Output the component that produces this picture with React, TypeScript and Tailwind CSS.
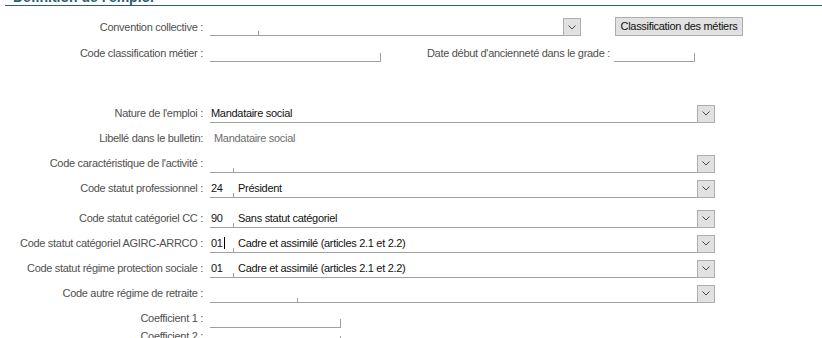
import React from 'react';

const Chevron = () => (
  <svg width="8" height="5" viewBox="0 0 8 5" fill="none" stroke="#4a4a4a" strokeWidth={1}>
    <path d="M0.5 0.5 L4 4 L7.5 0.5" />
  </svg>
);

const Label = ({ children }: { children: React.ReactNode }) => (
  <div className="w-[207px] shrink-0 pr-[4px] text-right text-[#505050] whitespace-nowrap">{children}</div>
);

interface ComboProps {
  width: string;
  tick?: string;
  code?: string;
  text?: string;
  caret?: boolean;
}

const Combo = ({ width, tick, code, text, caret }: ComboProps) => (
  <div className={`flex h-[18px] ${width}`}>
    <div className="relative flex flex-1 items-center border-b border-[#a0a0a0] text-[#111]">
      {tick && (
        <span className="flex w-[23px] shrink-0 items-center pl-[1px]">
          {code}
          {caret && <span className="ml-[1px] inline-block h-[12px] w-px bg-black" />}
        </span>
      )}
      <span className={`whitespace-nowrap ${tick ? 'pl-[5px]' : 'pl-[1px]'}`}>{text}</span>
      {tick && <span className={`absolute bottom-0 h-[4px] w-px bg-[#a0a0a0] ${tick}`} />}
    </div>
    <div className="flex w-[18px] shrink-0 items-center justify-center border border-[#adadad] bg-[#e1e1e1]">
      <Chevron />
    </div>
  </div>
);

const TextBox = ({ width }: { width: string }) => (
  <div className={`flex h-[18px] items-end justify-end border-b border-[#a0a0a0] ${width}`}>
    <div className="h-[8px] w-px bg-[#a0a0a0]" />
  </div>
);

const Row = ({ label, children, h = 'h-[25px]' }: { label: React.ReactNode; children?: React.ReactNode; h?: string }) => (
  <div className={`flex items-center ${h}`}>
    <Label>{label}</Label>
    <div className="flex items-center pl-[3px]">{children}</div>
  </div>
);

export default function App() {
  return (
    <div
      className="relative h-[338px] w-[822px] overflow-hidden bg-white text-[11px] leading-none tracking-[-0.3px]"
      style={{ fontFamily: '"Liberation Sans", Arial, sans-serif' }}
    >
      <div className="mt-[-10px] h-[15px] pl-[13px] text-[14px] font-bold leading-[14px] tracking-normal text-[#2a5d74]">
        Définition de l'emploi
      </div>
      <div className="ml-[5px] h-px bg-[#2f5f6f]" />

      <div className="mt-[9px] flex flex-col">
        <div className="flex h-[24px] items-center">
          <Label>Convention collective :</Label>
          <div className="pl-[3px]">
            <Combo width="w-[371px]" tick="left-[48px]" />
          </div>
          <button className="ml-[34px] mt-[-1px] h-[19px] w-[128px] border border-[#adadad] bg-[#e1e1e1] text-[11px] text-[#111]">
            Classification des métiers
          </button>
        </div>
        <div className="flex h-[28px] items-center">
          <Label>Code classification métier :</Label>
          <div className="pl-[3px]">
            <TextBox width="w-[171px]" />
          </div>
          <div className="w-[233px] shrink-0 pr-[4px] text-right text-[#505050] whitespace-nowrap">
            Date début d'ancienneté dans le grade :
          </div>
          <TextBox width="w-[81px]" />
        </div>

        <div className="mt-[34px]">
          <Row label="Nature de l'emploi :">
            <Combo width="w-[505px]" text="Mandataire social" />
          </Row>
          <Row label="Libellé dans le bulletin:">
            <span className="pl-[4px] text-[#6d6d6d]">Mandataire social</span>
          </Row>
          <Row label="Code caractéristique de l'activité :">
            <Combo width="w-[505px]" tick="left-[23px]" />
          </Row>
          <Row label="Code statut professionnel :">
            <Combo width="w-[505px]" tick="left-[23px]" code="24" text="Président" />
          </Row>
          <div className="mt-[5px]">
            <Row label="Code statut catégoriel CC :">
              <Combo width="w-[505px]" tick="left-[23px]" code="90" text="Sans statut catégoriel" />
            </Row>
          </div>
          <Row label="Code statut catégoriel AGIRC-ARRCO :">
            <Combo width="w-[505px]" tick="left-[23px]" code="01" caret text="Cadre et assimilé (articles 2.1 et 2.2)" />
          </Row>
          <Row label="Code statut régime protection sociale :">
            <Combo width="w-[505px]" tick="left-[23px]" code="01" text="Cadre et assimilé (articles 2.1 et 2.2)" />
          </Row>
          <Row label="Code autre régime de retraite :">
            <Combo width="w-[505px]" tick="left-[87px]" />
          </Row>
          <Row label="Coefficient 1 :">
            <TextBox width="w-[131px]" />
          </Row>
          <Row label="Coefficient 2 :" h="h-[10px]">
            <TextBox width="w-[131px]" />
          </Row>
        </div>
      </div>
    </div>
  );
}
